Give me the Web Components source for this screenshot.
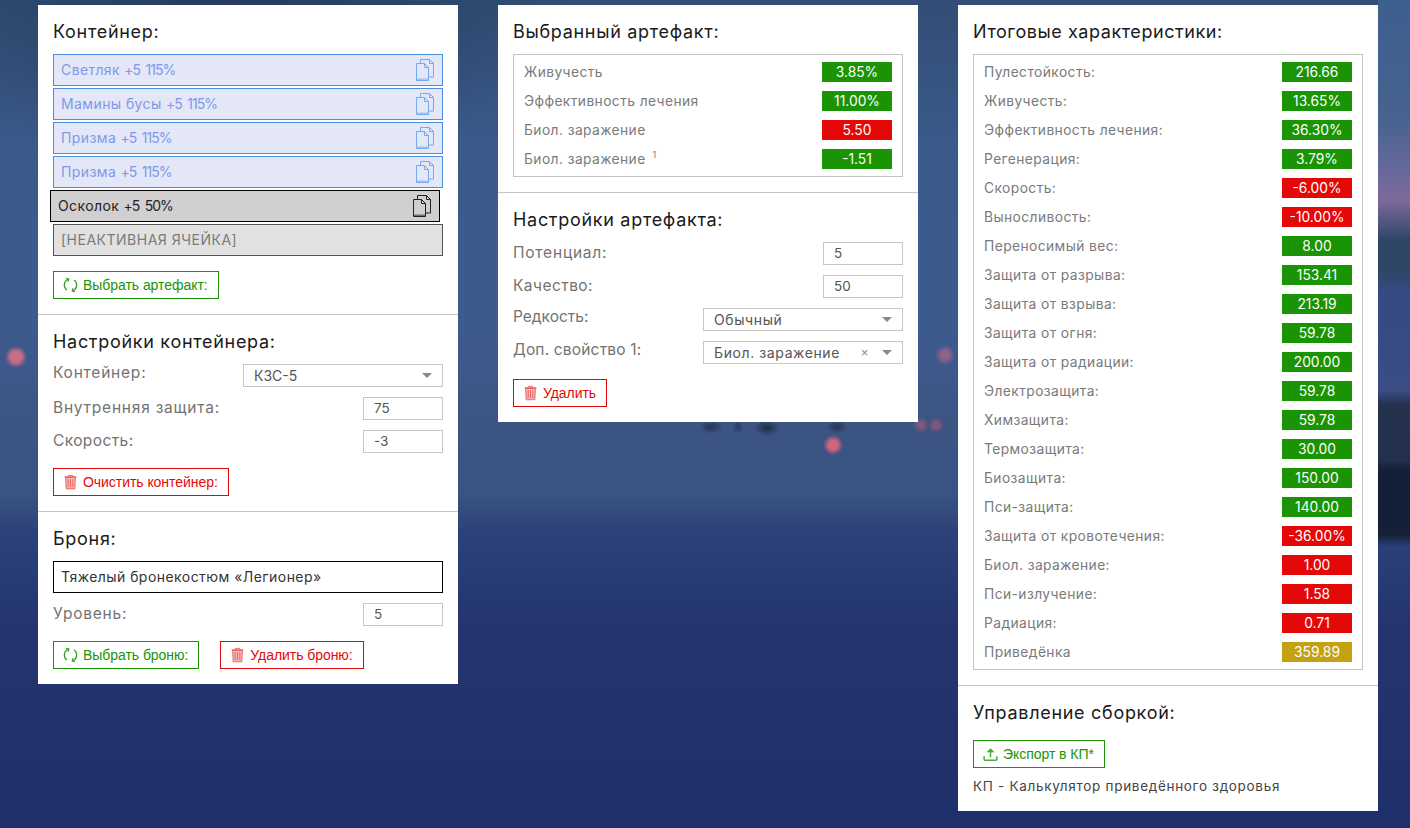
<!DOCTYPE html>
<html lang="ru"><head><meta charset="utf-8"><style>
html,body{margin:0;padding:0;height:828px;overflow:hidden}
body{font-family:"Inter","Liberation Sans",sans-serif;background-color:#22336e;
background-image:
radial-gradient(circle 11px at 16px 357px,#dc708add 0 50%,#dc708a00 100%),
radial-gradient(circle 10px at 945px 355px,#c8688a99 0 40%,#c8688a00 100%),
radial-gradient(circle 10px at 833px 445px,#e8687add 0 45%,#e8687a00 100%),
radial-gradient(circle 8px at 921px 425px,#b05a7899 0 35%,#b05a7800 100%),
radial-gradient(circle 8px at 936px 425px,#b05a7899 0 35%,#b05a7800 100%),
radial-gradient(ellipse 12px 7px at 711px 427px,#202c45cc,#202c4500),
radial-gradient(ellipse 6px 7px at 738px 427px,#202c4599,#202c4500),
radial-gradient(ellipse 13px 8px at 767px 428px,#1c2840ee,#1c284000),
radial-gradient(ellipse 10px 7px at 837px 427px,#202c45cc,#202c4500),
linear-gradient(180deg,#3d5f8e 0,#47638f 120px,#64689a 165px,#7c6a9a 200px,#52577f 222px,#2f4566 240px,#2f4566 270px,#344a80 290px,#3a4d85 390px,#24314f 405px,#22304d 460px,#141f38 470px,#141f38 535px,#2a3e78 546px,#2a3e78 100%),
radial-gradient(ellipse 340px 170px at 230px 0,#1e2f4c99,#1e2f4c00),
linear-gradient(180deg,#324e76 0,#3b5a8a 150px,#3e5a8d 340px,#3b5482 430px,#3a5382 495px,#2c4179 532px,#24356f 620px,#1f2f6a 828px);
background-size:auto,auto,auto,auto,auto,auto,auto,auto,auto,32px 546px,auto,auto;
background-position:0 0,0 0,0 0,0 0,0 0,0 0,0 0,0 0,0 0,1378px 0,0 0,0 0;
background-repeat:no-repeat;
}
.n{letter-spacing:-1px;word-spacing:2.5px}
</style></head><body>
<template id="t-app"><style>
:host{display:flex;gap:40px;padding:5px 0 0 38px;align-items:flex-start;box-sizing:border-box;width:1410px}
</style><slot></slot></template>

<template id="t-panel"><style>
:host{display:block;width:420px;background:#fff}
</style><slot></slot></template>

<template id="t-section"><style>
:host{display:block;padding:16px 15px 15px;border-top:1px solid #c4c4c4}
:host(:first-child){border-top:0}
h2{margin:0 0 12px;font:400 18px/21px "Inter",sans-serif;color:#1a1a1a;letter-spacing:.7px}
</style><h2><slot name="title"></slot></h2><slot></slot></template>

<template id="t-slot"><style>
:host{display:flex;align-items:center;justify-content:space-between;box-sizing:border-box;height:32px;margin-bottom:2px;padding:0 7px;border:1px solid #4a90e2;background:#e3e7f7;color:#7f99e6;font:400 14px/1 "Inter",sans-serif;letter-spacing:.4px}
:host([kind=sel]){background:#d1cfcf;border-color:#000;color:#222;margin-left:-3px;margin-right:3px}
:host([kind=off]){background:#e1e1e1;border-color:#555;color:#7a7a7a;margin-bottom:0;letter-spacing:.5px}
svg{width:20px;height:24px;fill:none;stroke:#77a9ee;stroke-width:1;flex:none}
:host([kind=sel]) svg{stroke:#222}
</style><span><slot></slot></span><svg viewBox="0 0 20 24"><path d="M5.5 5.5V1.5h9l4 4V19h-5"/><path d="M14.5 1.5v4h4"/><path d="M1.5 5.5h8l4 4v13H1.5z"/><path d="M9.5 5.5v4h4"/><path d="M2 21.5H13" stroke-width="2" opacity=".55"/></svg></template>

<template id="t-btn"><style>
:host{display:inline-flex;align-items:center;box-sizing:border-box;height:28px;padding:0 10px 0 9px;gap:5px;border:1px solid #1a9404;background:#fff;color:#1a9404;font:400 14px/1 "Liberation Sans",Arial,sans-serif;letter-spacing:-.05px;white-space:nowrap}
:host([red]){border-color:#e40808;color:#e40808}
svg{width:15px;height:16px;flex:none}
</style><slot></slot></template>

<template id="t-row"><style>
:host{display:flex;justify-content:space-between;align-items:flex-start;color:#737373;font:400 15.5px/19px "Inter",sans-serif;letter-spacing:.78px;margin-bottom:10px;height:23px}
.l{padding-top:1px}
:host([sel]) .l{padding-top:0;margin-top:-1px}
</style><span class="l"><slot name="label"></slot></span><slot></slot></template>

<template id="t-input"><style>
:host{display:block;box-sizing:border-box;width:80px;height:23px;border:1px solid #c6c6c6;padding:0 10px;font:400 13.5px/21px "Inter",sans-serif;letter-spacing:0;color:#555}
</style><slot></slot></template>

<template id="t-select"><style>
:host{display:flex;align-items:center;box-sizing:border-box;width:200px;height:23px;border:1px solid #c6c6c6;padding:0 10px;font:400 14px/21px "Inter",sans-serif;letter-spacing:.6px;color:#555}
span{flex:1}
b{width:0;height:0;border:5px solid transparent;border-top:5px solid #888;border-bottom:0}
</style><span><slot></slot></span><slot name="clear"></slot><b></b></template>

<template id="t-stats"><style>
:host{display:block;border:1px solid #c4c4c4;padding:7px 10px}
</style><slot></slot></template>

<template id="t-stat"><style>
:host{display:flex;justify-content:space-between;align-items:center;height:20px;margin-bottom:9px;color:#7a7a7a;font:400 13.8px/20px "Inter",sans-serif;letter-spacing:.42px}
:host(:last-child){margin-bottom:0}
b{font-weight:400;display:block;width:70px;text-align:center;background:#1a9404;color:#fff;font-size:13.8px;line-height:20px;letter-spacing:0}
:host([c=r]) b{background:#e40808}
:host([c=y]) b{background:#c4a113}
</style><span><slot></slot></span><b id="v"></b></template>

<template id="t-armor"><style>
:host{display:flex;align-items:center;box-sizing:border-box;height:32px;border:1px solid #000;padding:0 7px;color:#333;font:400 14px/1 "Inter",sans-serif;letter-spacing:.45px;margin-bottom:10px}
</style><slot></slot></template>

<a-app>
<a-panel>
 <a-section>
  <span slot="title">Контейнер:</span>
  <a-slot>Светляк <span class="n">+5 115%</span></a-slot><a-slot>Мамины бусы <span class="n">+5 115%</span></a-slot><a-slot>Призма <span class="n">+5 115%</span></a-slot><a-slot>Призма <span class="n">+5 115%</span></a-slot>
  <a-slot kind="sel">Осколок <span class="n">+5 50%</span></a-slot><a-slot kind="off" noicon>[НЕАКТИВНАЯ ЯЧЕЙКА]</a-slot>
  <div style="margin-top:15px"><a-btn icon="sync">Выбрать артефакт:</a-btn></div>
 </a-section>
 <a-section>
  <span slot="title">Настройки контейнера:</span>
  <a-row sel><span slot="label">Контейнер:</span><a-select><span style="letter-spacing:0">КЗС-5</span></a-select></a-row>
  <a-row><span slot="label">Внутренняя защита:</span><a-input>75</a-input></a-row>
  <a-row><span slot="label" style="letter-spacing:.4px">Скорость:</span><a-input>-3</a-input></a-row>
  <div style="margin-top:15px"><a-btn red icon="trash">Очистить контейнер:</a-btn></div>
 </a-section>
 <a-section>
  <span slot="title">Броня:</span>
  <a-armor>Тяжелый бронекостюм «Легионер»</a-armor>
  <a-row><span slot="label">Уровень:</span><a-input>5</a-input></a-row>
  <div style="display:flex;gap:21px;margin-top:15px"><a-btn icon="sync">Выбрать броню:</a-btn><a-btn red icon="trash">Удалить броню:</a-btn></div>
 </a-section>
</a-panel>
<a-panel>
 <a-section>
  <span slot="title">Выбранный артефакт:</span>
  <a-stats><a-stat v="3.85%">Живучесть</a-stat><a-stat v="11.00%">Эффективность лечения</a-stat><a-stat v="5.50" c="r">Биол. заражение</a-stat><a-stat v="-1.51">Биол. заражение<sup style="font-size:9px;line-height:0;vertical-align:6px;margin-left:7px">1</sup></a-stat></a-stats>
 </a-section>
 <a-section>
  <span slot="title">Настройки артефакта:</span>
  <a-row><span slot="label">Потенциал:</span><a-input>5</a-input></a-row>
  <a-row><span slot="label" style="letter-spacing:.45px">Качество:</span><a-input>50</a-input></a-row>
  <a-row sel><span slot="label" style="letter-spacing:0">Редкость:</span><a-select>Обычный</a-select></a-row>
  <a-row sel><span slot="label" style="letter-spacing:.18px">Доп. свойство 1:</span><a-select>Биол. заражение<span slot="clear" style="color:#888;font:400 13px/1 'Liberation Sans',sans-serif;margin-right:13px">×</span></a-select></a-row>
  <div style="margin-top:15px"><a-btn red icon="trash">Удалить</a-btn></div>
 </a-section>
</a-panel>
<a-panel>
 <a-section>
  <span slot="title" style="letter-spacing:.55px">Итоговые характеристики:</span>
  <a-stats>
  <a-stat v="216.66">Пулестойкость:</a-stat><a-stat v="13.65%">Живучесть:</a-stat><a-stat v="36.30%">Эффективность лечения:</a-stat><a-stat v="3.79%">Регенерация:</a-stat><a-stat v="-6.00%" c="r">Скорость:</a-stat><a-stat v="-10.00%" c="r">Выносливость:</a-stat><a-stat v="8.00">Переносимый вес:</a-stat><a-stat v="153.41">Защита от разрыва:</a-stat><a-stat v="213.19">Защита от взрыва:</a-stat><a-stat v="59.78">Защита от огня:</a-stat><a-stat v="200.00">Защита от радиации:</a-stat><a-stat v="59.78">Электрозащита:</a-stat><a-stat v="59.78">Химзащита:</a-stat><a-stat v="30.00">Термозащита:</a-stat><a-stat v="150.00">Биозащита:</a-stat><a-stat v="140.00">Пси-защита:</a-stat><a-stat v="-36.00%" c="r">Защита от кровотечения:</a-stat><a-stat v="1.00" c="r">Биол. заражение:</a-stat><a-stat v="1.58" c="r">Пси-излучение:</a-stat><a-stat v="0.71" c="r">Радиация:</a-stat><a-stat v="359.89" c="y">Приведёнка</a-stat>
  </a-stats>
 </a-section>
 <a-section>
  <span slot="title">Управление сборкой:</span>
  <div style="margin-top:17px;display:flex"><a-btn icon="up">Экспорт в КП*</a-btn></div>
  <div style="margin-top:9px;font:400 13.5px/19px Inter,sans-serif;letter-spacing:.7px;color:#444">КП - Калькулятор приведённого здоровья</div>
 </a-section>
</a-panel>
</a-app>
<script>
const ICONS={
sync:'<svg viewBox="0 0 16 16" fill="none" stroke="#2f9f20" stroke-width="1.4"><path d="M6.3 1.7A6.6 6.6 0 0 0 4.2 13.4"/><path d="M9.7 14.3A6.6 6.6 0 0 0 11.8 2.6"/><path d="M3.2 .8 6.3 1.7 5.2 4.6" stroke-width="1.1"/><path d="M12.8 15.2 9.7 14.3 10.8 11.4" stroke-width="1.1"/></svg>',
trash:'<svg viewBox="0 0 16 16" fill="#f8b8b8" stroke="#ee5d5d" stroke-width="1"><path d="M5.7 2.2V.9h4.6v1.3" fill="none"/><path d="M1.8 2.6h12.4" stroke-width="1.5"/><path d="M2.8 3.2l.6 12h9.2l.6-12z"/><path d="M5.5 5v8.5M8 5v8.5M10.5 5v8.5" fill="none"/></svg>',
up:'<svg viewBox="0 0 16 16" fill="none" stroke="#4aab3a" stroke-width="1.6"><path d="M8 11.5V3"/><path d="M4.3 6.2 8 2.4l3.7 3.8" fill="#4aab3a" stroke-width="1"/><path d="M1.2 10.5v3.2a1 1 0 0 0 1 1h11.6a1 1 0 0 0 1-1v-3.2"/></svg>'};
function tpl(name,id,init){customElements.define(name,class extends HTMLElement{constructor(){super();this.attachShadow({mode:'open'}).appendChild(document.getElementById(id).content.cloneNode(true));}connectedCallback(){init&&init(this)}})}
tpl('a-app','t-app');tpl('a-panel','t-panel');tpl('a-section','t-section');
tpl('a-slot','t-slot',e=>{if(e.hasAttribute('noicon'))e.shadowRoot.querySelector('svg').remove()});
tpl('a-btn','t-btn',e=>{const k=e.getAttribute('icon');if(k){const s=document.createElement('span');s.style.display='flex';s.innerHTML=ICONS[k];e.shadowRoot.insertBefore(s,e.shadowRoot.querySelector('slot'))}});
tpl('a-row','t-row');tpl('a-input','t-input');tpl('a-select','t-select');tpl('a-stats','t-stats');tpl('a-armor','t-armor');
tpl('a-stat','t-stat',e=>{e.shadowRoot.getElementById('v').textContent=e.getAttribute('v')});
</script>
</body></html>
